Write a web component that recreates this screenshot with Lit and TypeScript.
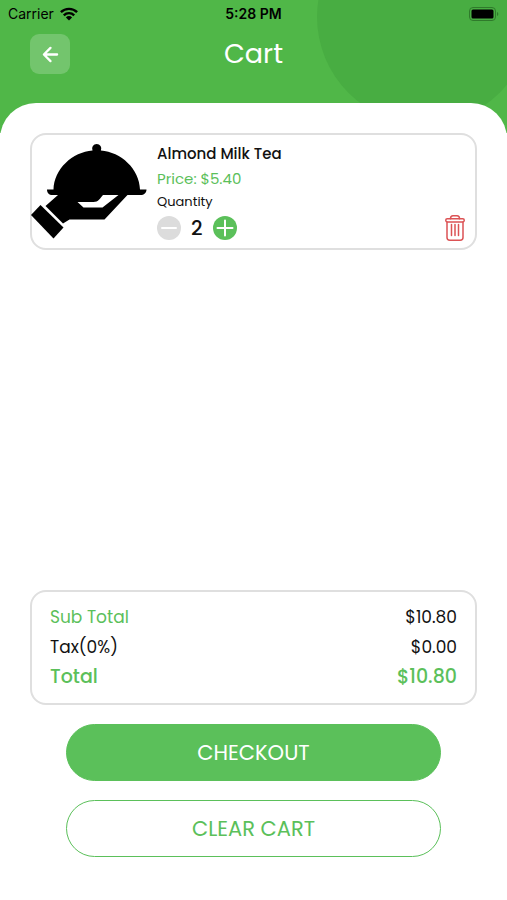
import { LitElement, html, css, svg } from "lit";
import { customElement, state } from "lit/decorators.js";

const money = (value: number) => `$${value.toFixed(2)}`;

const wifiIcon = svg`
  <svg class="wifi" viewBox="0 0 18 14" aria-hidden="true">
    <g fill="none" stroke="#000" stroke-width="2.4">
      <path d="M0.9 5.2a11.6 11.6 0 0 1 16.2 0" />
      <path d="M3.8 8.3a7.4 7.4 0 0 1 10.4 0" />
    </g>
    <path d="M9 13.6 5.9 10.4a4.4 4.4 0 0 1 6.2 0Z" />
  </svg>`;

const batteryIcon = svg`
  <svg class="battery" viewBox="0 0 30 14" aria-hidden="true">
    <rect x="0.5" y="0.5" width="26" height="13" rx="3.5" fill="none" stroke="#2f7a2b" />
    <rect x="2.5" y="2.5" width="22" height="9" rx="1.5" />
    <path d="M28 5c1.8.8 1.8 3.2 0 4Z" fill="#2f7a2b" />
  </svg>`;

const arrowIcon = svg`
  <svg class="arrow" viewBox="0 0 18 18" aria-hidden="true">
    <path d="M16 9H2.500M9 2 2 9l7 7" fill="none" stroke="#fff" stroke-width="2.4"
      stroke-linecap="round" stroke-linejoin="round" />
  </svg>`;

const dishImage = svg`
  <svg class="dish" viewBox="0 0 118 100" role="img" aria-label="Almond Milk Tea">
    <path d="M62.500 8.500a4.600 4.600 0 1 1 8.400 0C91 10 109.500 27 110 47.500h6.500c0 3.500-2.500 5.500-6 5.500H97.500L74.500 77.500H39.500L33 81.500 15.500 64 28 53h-5.500c-3.500 0-5.500-2-5.500-5.500h6.500C24 27 42.500 10 62.500 8.500Z" />
    <path d="M88.500 53H73c-3 3.500-4.500 7-9.500 7H47.500l6 5.500H72.500Z" fill="#fff" />
    <path d="M10.500 63 33.500 85.500 23.500 96.500 1 73Z" />
  </svg>`;

const minusIcon = svg`
  <svg viewBox="0 0 24 24" aria-hidden="true">
    <path d="M5 12h14" stroke="#fff" stroke-width="2" stroke-linecap="round" />
  </svg>`;

const plusIcon = svg`
  <svg viewBox="0 0 24 24" aria-hidden="true">
    <path d="M4.500 12h15M12 4.500v15" stroke="#fff" stroke-width="2" stroke-linecap="round" />
  </svg>`;

const trashIcon = svg`
  <svg viewBox="0 0 20 26" aria-hidden="true">
    <g fill="none" stroke="#dc5355" stroke-width="1.500" stroke-linejoin="round" stroke-linecap="round">
      <rect x="0.800" y="3.700" width="18.400" height="3.300" rx="1.400" />
      <path d="M5.500 3.700c0-2 1-2.900 2.500-2.900h4c1.500 0 2.500.9 2.500 2.900" />
      <path d="M2 7v15.500c0 1.800 1 2.700 2.800 2.700h10.400c1.800 0 2.800-.9 2.800-2.700V7" />
      <path d="M6.500 9.500v11M10 9.500v11M13.500 9.500v11" />
    </g>
  </svg>`;

@customElement("app-root")
export class AppRoot extends LitElement {
  @state() private quantity = 2;
  private readonly price = 5.4;

  static styles = css`
    :host {
      display: flex;
      flex-direction: column;
      min-height: 100vh;
      background: #fff;
      color: #111;
      font-family: Poppins, Inter, sans-serif;
    }
    * {
      box-sizing: border-box;
    }
    button {
      font: inherit;
      padding: 0;
      border: 0;
      cursor: pointer;
    }
    svg {
      display: block;
    }
    header {
      position: relative;
      overflow: hidden;
      background: #50b748;
      padding-bottom: 56px;
    }
    .bubble {
      position: absolute;
      top: -90px;
      right: -24px;
      width: 214px;
      height: 214px;
      border-radius: 50%;
      background: #48ad42;
    }
    .status,
    .bar {
      position: relative;
      display: grid;
      grid-template-columns: 1fr auto 1fr;
      align-items: center;
    }
    .status {
      height: 27px;
      padding: 0 8px;
      color: #000;
      font-family: Inter, sans-serif;
      font-size: 14px;
    }
    .carrier {
      display: flex;
      align-items: center;
      gap: 6px;
    }
    .time {
      font-weight: 600;
    }
    .wifi {
      width: 18px;
      height: 14px;
    }
    .battery {
      width: 30px;
      height: 14px;
      justify-self: end;
    }
    .bar {
      height: 50px;
      padding: 4px 30px 0;
    }
    .back {
      display: grid;
      place-items: center;
      width: 40px;
      height: 40px;
      border-radius: 9px;
      background: #73c56d;
    }
    .arrow {
      width: 17px;
      height: 17px;
    }
    h1 {
      margin: 0;
      color: #fff;
      font-size: 27px;
      line-height: 40px;
      font-weight: 400;
    }
    main {
      position: relative;
      flex: 1;
      display: flex;
      flex-direction: column;
      margin-top: -30px;
      padding: 30px 30px 43px;
      border-radius: 36px 36px 0 0;
      background: #fff;
    }
    .card {
      border: 2px solid #dfdfdf;
      border-radius: 16px;
    }
    .item {
      display: flex;
      gap: 9px;
      height: 117px;
    }
    .dish {
      width: 118px;
      height: 100px;
      margin: 7px 0 0 -2px;
      flex: none;
    }
    .details {
      flex: 1;
      padding-top: 6px;
    }
    h2,
    p {
      margin: 0;
      font-size: 15px;
      line-height: 25px;
      font-weight: 400;
    }
    h2 {
      font-weight: 500;
    }
    .price {
      color: #5bc05a;
    }
    .label {
      font-size: 13px;
      line-height: 21px;
    }
    .stepper {
      display: flex;
      align-items: center;
      gap: 10px;
      margin-top: 4px;
    }
    .step {
      width: 24px;
      height: 24px;
      border-radius: 50%;
      background: #5bc05a;
    }
    .step.muted {
      background: #dcdcdc;
    }
    output {
      font-size: 20px;
      line-height: 24px;
      font-weight: 500;
    }
    .remove {
      align-self: flex-end;
      width: 20px;
      height: 26px;
      margin: 0 10px 7px 0;
      background: none;
    }
    .totals {
      margin: auto 0 0;
      padding: 10px 18px 11px;
    }
    .row {
      display: flex;
      justify-content: space-between;
      font-size: 17px;
      line-height: 30px;
    }
    dt,
    dd {
      margin: 0;
    }
    .accent {
      color: #5bc05a;
    }
    .grand {
      font-size: 19px;
      font-weight: 500;
    }
    .actions {
      display: flex;
      flex-direction: column;
      gap: 19px;
      padding: 19px 36px 0;
    }
    .action {
      height: 57px;
      border: 1px solid #5bc05a;
      border-radius: 29px;
      background: #fff;
      color: #5bc05a;
      font-size: 21px;
    }
    .action.primary {
      background: #5bc05a;
      color: #fff;
    }
  `;

  private change(step: number) {
    this.quantity = Math.max(1, this.quantity + step);
  }

  render() {
    const total = money(this.price * this.quantity);
    return html`
      <header>
        <div class="bubble"></div>
        <div class="status">
          <div class="carrier">Carrier ${wifiIcon}</div>
          <div class="time">5:28 PM</div>
          ${batteryIcon}
        </div>
        <div class="bar">
          <button class="back" aria-label="Back">${arrowIcon}</button>
          <h1>Cart</h1>
        </div>
      </header>
      <main>
        <article class="card item">
          ${dishImage}
          <div class="details">
            <h2>Almond Milk Tea</h2>
            <p class="price">Price: ${money(this.price)}</p>
            <p class="label" id="quantity">Quantity</p>
            <div class="stepper" role="group" aria-labelledby="quantity">
              <button class="step muted" aria-label="Decrease" @click=${() => this.change(-1)}>${minusIcon}</button>
              <output aria-labelledby="quantity">${this.quantity}</output>
              <button class="step" aria-label="Increase" @click=${() => this.change(1)}>${plusIcon}</button>
            </div>
          </div>
          <button class="remove" aria-label="Remove item">${trashIcon}</button>
        </article>
        <dl class="card totals">
          <div class="row"><dt class="accent">Sub Total</dt><dd>${total}</dd></div>
          <div class="row"><dt>Tax(0%)</dt><dd>$0.00</dd></div>
          <div class="row grand accent"><dt>Total</dt><dd>${total}</dd></div>
        </dl>
        <div class="actions">
          <button class="action primary">CHECKOUT</button>
          <button class="action">CLEAR CART</button>
        </div>
      </main>
    `;
  }
}
